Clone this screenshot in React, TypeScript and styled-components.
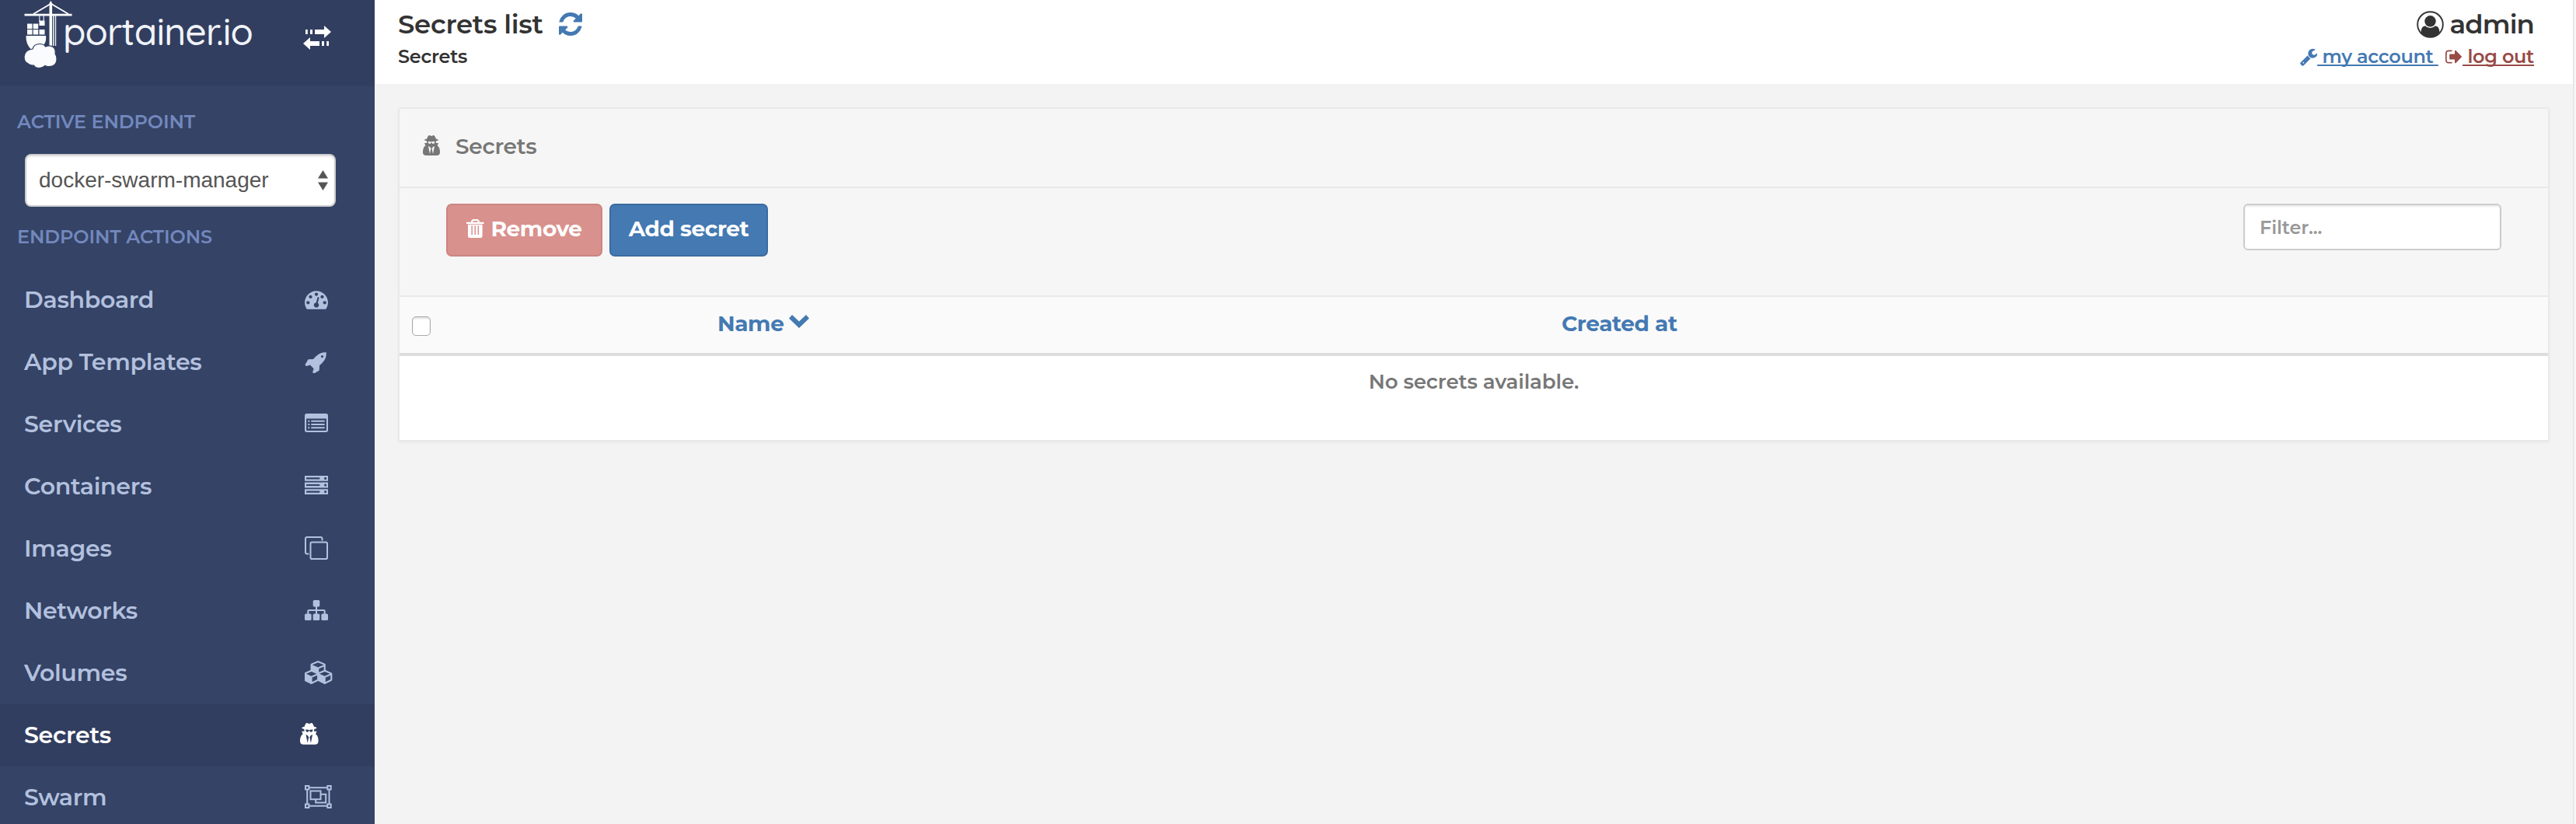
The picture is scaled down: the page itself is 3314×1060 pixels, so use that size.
import React from "react";
import styled, { createGlobalStyle, css } from "styled-components";

const sans = `Montserrat, Inter, "Liberation Sans", sans-serif`;

const color = {
  sidebar: "#344366",
  sidebarDark: "#313e5f",
  navText: "#b3c0de",
  section: "#7388bd",
  blue: "#4479b2",
  blueBorder: "#3b6ca0",
  red: "#984a46",
  dangerSoft: "#d9918d",
  dangerSoftBorder: "#cc8581",
  page: "#f3f3f3",
  line: "#e9e9e9",
  muted: "#777777",
  text: "#333333",
};

const Global = createGlobalStyle`
  * { box-sizing: border-box; }
  body { margin: 0; background: #f8f8f8; font-family: ${sans}; font-weight: 600; color: ${color.text}; overflow: hidden; }
`;

const Page = styled.div`
  display: flex;
  width: 3314px;
  height: 1060px;
  overflow: hidden;
  padding-right: 2px;
`;

/* Sidebar */
const Sidebar = styled.aside`
  display: flex;
  flex-direction: column;
  flex: none;
  width: 482px;
  background: ${color.sidebar};
`;
const Brand = styled.div`
  display: flex;
  align-items: flex-start;
  height: 110px;
  flex: none;
  padding-left: 30px;
  background: ${color.sidebarDark};
`;
const BrandName = styled.span`
  width: 309px;
  margin: 7px 0 0 1px;
  font-family: Quicksand, Lato, sans-serif;
  font-weight: 500;
  font-size: 48px;
  line-height: 66px;
  letter-spacing: -0.9px;
  color: #f1f3f9;
  white-space: nowrap;
`;
const ToggleIcon = styled.svg`
  margin-top: 32px;
  flex: none;
`;
const SectionLabel = styled.div<{ $top: number }>`
  margin-top: ${(p) => p.$top}px;
  padding-left: 22px;
  font-size: 24px;
  line-height: 40px;
  letter-spacing: -0.1px;
  color: ${color.section};
`;
const EndpointSelect = styled.div`
  display: flex;
  align-items: center;
  justify-content: space-between;
  flex: none;
  width: 400px;
  height: 68px;
  margin: 21px 0 0 32px;
  padding: 0 8px 0 16px;
  border: 2px solid #cccccc;
  border-radius: 8px;
  background: #ffffff;
  box-shadow: inset 0 2px 2px rgba(0, 0, 0, 0.075);
  font-family: "Liberation Sans", Arial, sans-serif;
  font-weight: 400;
  font-size: 28px;
  color: #555555;
`;
const Nav = styled.nav`
  display: flex;
  flex-direction: column;
  margin-top: 21px;
`;
const NavItem = styled.a<{ $active?: boolean }>`
  display: flex;
  align-items: center;
  flex: none;
  height: 80px;
  padding: 0 0 2px 31px;
  font-size: 30px;
  letter-spacing: -0.3px;
  color: ${color.navText};
  ${(p) => p.$active && css`
    background: ${color.sidebarDark};
    color: #ffffff;
  `}
`;
const NavText = styled.span`
  flex: 1;
`;
const NavIcon = styled.span<{ $w: number }>`
  display: flex;
  width: ${(p) => p.$w}px;
`;

/* Main column */
const Main = styled.main`
  display: flex;
  flex-direction: column;
  flex: 1;
  background: ${color.page};
  border-right: 2px solid #e7e7e7;
`;
const Header = styled.header`
  display: flex;
  justify-content: space-between;
  height: 108px;
  padding: 11px 50px 0 30px;
  background: #ffffff;
`;
const HeaderSide = styled.div<{ $end?: boolean }>`
  display: flex;
  flex-direction: column;
  gap: 7px;
  align-items: ${(p) => (p.$end ? "flex-end" : "flex-start")};
`;
const TitleRow = styled.div<{ $gap: number }>`
  display: flex;
  align-items: center;
  gap: ${(p) => p.$gap}px;
  font-size: 34px;
  line-height: 40px;
  letter-spacing: -0.3px;
`;
const UserName = styled.span`
  letter-spacing: -0.9px;
`;
const SubRow = styled.div`
  display: flex;
  align-items: center;
  font-size: 24px;
  line-height: 30px;
  letter-spacing: -0.3px;
`;
const HeaderLink = styled.a<{ $c: string; $gap?: number }>`
  display: flex;
  align-items: center;
  margin-left: ${(p) => p.$gap ?? 0}px;
  color: ${(p) => p.$c};
`;
const LinkText = styled.span`
  white-space: pre;
  text-decoration: underline;
  text-decoration-thickness: 2px;
  text-underline-offset: 2px;
  text-decoration-skip-ink: none;
`;

/* Panel */
const Panel = styled.section`
  display: flex;
  flex-direction: column;
  height: 430px;
  margin: 30px 30px 0;
  border: 2px solid ${color.line};
  border-radius: 3px;
  background: #ffffff;
  box-shadow: 0 2px 3px rgba(0, 0, 0, 0.04);
`;
const PanelHeader = styled.div`
  display: flex;
  align-items: center;
  gap: 20px;
  height: 102px;
  padding: 0 30px 4px;
  border-bottom: 2px solid ${color.line};
  background: #f6f6f6;
  font-size: 28px;
  letter-spacing: -0.3px;
  color: ${color.muted};
`;
const Toolbar = styled.div`
  display: flex;
  align-items: flex-start;
  justify-content: space-between;
  height: 140px;
  padding: 20px 60px 0;
  border-bottom: 2px solid ${color.line};
  background: #f6f6f6;
`;
const Buttons = styled.div`
  display: flex;
  gap: 9px;
`;
const Button = styled.button<{ $danger?: boolean; $w: number }>`
  display: flex;
  align-items: center;
  justify-content: center;
  gap: 8px;
  width: ${(p) => p.$w}px;
  height: 68px;
  padding: 0 0 5px;
  border: 2px solid ${(p) => (p.$danger ? color.dangerSoftBorder : color.blueBorder)};
  border-radius: 7px;
  background: ${(p) => (p.$danger ? color.dangerSoft : color.blue)};
  font-family: inherit;
  font-weight: 700;
  font-size: 28px;
  letter-spacing: -0.4px;
  color: #ffffff;
`;
const Filter = styled.input`
  width: 332px;
  height: 60px;
  padding: 0 19px;
  border: 2px solid #cccccc;
  border-radius: 6px;
  background: #ffffff;
  box-shadow: inset 0 2px 2px rgba(0, 0, 0, 0.075);
  font-family: inherit;
  font-weight: 600;
  font-size: 24px;
  letter-spacing: -0.1px;
  &::placeholder { color: #999999; opacity: 1; }
`;
const TableHead = styled.div`
  display: grid;
  grid-template-columns: 393px 1086px 1fr;
  align-items: center;
  height: 76px;
  padding: 0 16px 4px;
  border-bottom: 4px solid #dddddd;
  background: #fafafa;
  font-weight: 700;
  font-size: 28px;
  letter-spacing: -0.4px;
  color: ${color.blue};
`;
const HeadCell = styled.div`
  display: flex;
  align-items: center;
  gap: 7px;
`;
const Checkbox = styled.input`
  appearance: none;
  width: 24px;
  height: 25px;
  margin: 6px 0 0;
  border: 1px solid #a9a9a9;
  border-radius: 5px;
  background: #ffffff;
  box-shadow: inset 0 2px 2px rgba(0, 0, 0, 0.12);
`;
const SortIcon = styled.svg`
  margin-bottom: 5px;
`;
const Empty = styled.div`
  padding-top: 16px;
  text-align: center;
  font-size: 26px;
  line-height: 34px;
  letter-spacing: -0.1px;
  color: ${color.muted};
`;

/* Icons */
const Glyph = ({ d, box, w, h }: { d: string; box: string; w: number; h: number }) => (
  <svg width={w} height={h} viewBox={box} fill="currentColor"><path d={d} /></svg>
);

const paths = {
  dashboard: "M384 1152q0-53-37.5-90.5t-90.5-37.5-90.5 37.5-37.5 90.5 37.5 90.5 90.5 37.5 90.5-37.5 37.5-90.5zm192-448q0-53-37.5-90.5t-90.5-37.5-90.5 37.5-37.5 90.5 37.5 90.5 90.5 37.5 90.5-37.5 37.5-90.5zm428 481l101-382q6-26-7.5-48.5t-38.5-29.5-48 6.5-30 39.5l-101 382q-60 5-107 43.5t-63 98.5q-20 77 20 146t117 89 146-20 89-117q16-60-6-117t-72-91zm660-33q0-53-37.5-90.5t-90.5-37.5-90.5 37.5-37.5 90.5 37.5 90.5 90.5 37.5 90.5-37.5 37.5-90.5zm-640-640q0-53-37.5-90.5t-90.5-37.5-90.5 37.5-37.5 90.5 37.5 90.5 90.5 37.5 90.5-37.5 37.5-90.5zm448 192q0-53-37.5-90.5t-90.5-37.5-90.5 37.5-37.5 90.5 37.5 90.5 90.5 37.5 90.5-37.5 37.5-90.5zm320 448q0 261-141 483-19 29-54 29h-1402q-35 0-54-29-141-221-141-483 0-182 71-348t191-286 286-191 348-71 348 71 286 191 191 286 71 348z",
  rocket: "M1440 448q0-40-28-68t-68-28-68 28-28 68 28 68 68 28 68-28 28-68zm224-288q0 249-75.5 430.5t-253.5 360.5q-81 80-195 176l-20 379q-2 16-16 26l-384 224q-7 4-16 4-12 0-23-9l-64-64q-13-14-8-32l85-276-281-281-276 85q-3 1-9 1-14 0-23-9l-64-64q-17-19-5-39l224-384q10-14 26-16l379-20q96-114 176-195 188-187 358-258t431-71q14 0 24 9.5t10 22.5z",
  cubes: "M640 1632l384-192v-314l-384 164v342zm-64-454l404-173-404-173-404 173zm1088 454l384-192v-314l-384 164v342zm-64-454l404-173-404-173-404 173zm-448-293l384-165v-266l-384 164v267zm-64-379l441-189-441-189-441 189zm1088 518v416q0 36-19 67t-52 47l-448 224q-25 14-57 14t-57-14l-448-224q-4-2-7-4-2 2-7 4l-448 224q-25 14-57 14t-57-14l-448-224q-33-16-52-47t-19-67v-416q0-38 21.5-70t56.5-48l434-186v-400q0-38 21.5-70t56.5-48l448-192q23-10 50-10t50 10l448 192q35 16 56.5 48t21.5 70v400l434 186q36 16 57 48t21 70z",
  secret: "M704 1536l96-448-96-128-128-64zm256 0l128-640-128 64-96 128zm160-1010q-2-4-4-6-10-8-96-8-70 0-167 19-7 2-21 2t-21-2q-97-19-167-19-86 0-96 8-2 2-4 6 2 18 4 27 2 3 7.5 6.5t7.5 10.5q2 4 7.5 20.5t7 20.5 7.5 17 8.5 17 9 14 12 13.5 14 9.5 17.5 8 20.5 4 24.5 2q36 0 59-12.5t32.5-30 14.5-34.5 11.5-29.5 17.5-12.5h12q11 0 17.5 12.5t11.5 29.5 14.5 34.5 32.5 30 59 12.5q13 0 24.5-2t20.5-4 17.5-8 14-9.5 12-13.5 9-14 8.5-17 7.5-17 7-20.5 7.5-20.5q2-7 7.5-10.5t7.5-6.5q2-9 4-27zm416 879q0 121-73 190t-194 69h-874q-121 0-194-69t-73-190q0-61 4.5-118t19-125.5 37.5-123.5 63.5-103.5 93.5-74.5l-90-220h214q-22-64-22-128 0-12 2-32-194-40-194-96 0-57 210-99 17-62 51.5-134t70.5-114q32-37 76-37 30 0 84 31t84 31 84-31 84-31q44 0 76 37 36 42 70.5 114t51.5 134q210 42 210 99 0 56-194 96 7 81-20 160h214l-82 225q63 33 107.5 96.5t65.5 143.5 29 151.5 8 148.5z",
  refresh: "M1639 1056q0 5-1 7-64 268-268 434.5t-478 166.5q-146 0-282.5-55t-243.5-157l-129 129q-19 19-45 19t-45-19-19-45v-448q0-26 19-45t45-19h448q26 0 45 19t19 45-19 45l-137 137q71 66 161 102t187 36q134 0 250-65t186-179q11-17 53-117 8-23 30-23h192q13 0 22.5 9.5t9.5 22.5zm25-800v448q0 26-19 45t-45 19h-448q-26 0-45-19t-19-45 19-45l138-138q-148-137-349-137-134 0-250 65t-186 179q-11 17-53 117-8 23-30 23h-199q-13 0-22.5-9.5t-9.5-22.5v-7q65-268 270-434.5t480-166.5q146 0 284 55.5t245 156.5l130-129q19-19 45-19t45 19 19 45z",
  wrench: "M448 1472q0-26-19-45t-45-19-45 19-19 45 19 45 45 19 45-19 19-45zm644-420l-682 682q-37 37-90 37-52 0-91-37l-106-108q-38-36-38-90 0-53 38-91l681-681q39 98 114.5 173.5t173.5 114.5zm634-435q0 39-23 106-47 134-164.5 217.5t-258.5 83.5q-185 0-316.5-131.5t-131.5-316.5 131.5-316.5 316.5-131.5q58 0 121.5 16.5t107.5 46.5q16 11 16 28t-16 28l-293 169v224l193 107q5-3 79-48.5t135.5-81 70.5-35.5q15 0 23.5 10t8.5 25z",
  signOut: "M704 1440q0 4 1 20t.5 26.5-3 23.5-10 19.5-20.5 6.5h-320q-119 0-203.5-84.5t-84.5-203.5v-704q0-119 84.5-203.5t203.5-84.5h320q13 0 22.5 9.5t9.5 22.5q0 4 1 20t.5 26.5-3 23.5-10 19.5-20.5 6.5h-320q-66 0-113 47t-47 113v704q0 66 47 113t113 47h312l11.5 1 11.5 3 8 5.5 7 9 2 13.5zm928-544q0 26-19 45l-544 544q-19 19-45 19t-45-19-19-45v-288h-448q-26 0-45-19t-19-45v-384q0-26 19-45t45-19h448v-288q0-26 19-45t45-19 45 19l544 544q19 19 19 45z",
};

const ListIcon = () => (
  <svg width="30" height="30" viewBox="0 0 30 30" fill="currentColor">
    <path fillRule="evenodd" d="M2.7 2h24.6A2.7 2.7 0 0 1 30 4.7v18.6a2.7 2.7 0 0 1-2.7 2.7H2.7A2.7 2.7 0 0 1 0 23.3V4.7A2.7 2.7 0 0 1 2.7 2zM2.1 8.6v14.7q0 .6.6.6h24.6q.6 0 .6-.6V8.6z" />
    <path d="M4.3 10.7h2v2h-2zM8.3 10.7h17.4v2H8.3zM4.3 15h2v2h-2zM8.3 15h17.4v2H8.3zM4.3 19.300h2v2h-2zM8.3 19.300h17.4v2H8.3z" />
  </svg>
);
const ServerIcon = () => (
  <svg width="30" height="30" viewBox="0 0 30 30" fill="currentColor">
    {[2, 10.6, 19.2].map((y) => (
      <path key={y} fillRule="evenodd" d={`M0 ${y}h30v6.8H0zM2.1 ${y + 2.3}v2.2h17.2v-2.2zM25 ${y + 3.4}a1.6 1.6 0 1 0 3.2 0a1.6 1.6 0 1 0-3.2 0z`} />
    ))}
  </svg>
);
const CloneIcon = () => (
  <svg width="30" height="30" viewBox="0 0 30 30" fill="none" stroke="currentColor" strokeWidth="2">
    <rect x="7.5" y="7.5" width="21.5" height="21.5" rx="1.8" />
    <path d="M5.4 22.5H2.8A1.8 1.8 0 0 1 1 20.7V2.8A1.8 1.8 0 0 1 2.8 1h17.9a1.8 1.8 0 0 1 1.8 1.8v2.6" />
  </svg>
);
const SitemapIcon = () => (
  <svg width="30" height="30" viewBox="0 0 30 30" fill="currentColor">
    <rect x="10.7" y="2" width="8.6" height="8.6" rx="1.6" />
    <rect x="0" y="19.4" width="8.6" height="8.6" rx="1.6" />
    <rect x="10.7" y="19.4" width="8.6" height="8.6" rx="1.6" />
    <rect x="21.4" y="19.4" width="8.6" height="8.6" rx="1.6" />
    <path d="M4.3 20v-3.8q0-1.2 1.2-1.2h19q1.2 0 1.2 1.2V20M15 10v10" fill="none" stroke="currentColor" strokeWidth="2.1" />
  </svg>
);
const GroupIcon = () => (
  <svg width="35" height="30" viewBox="0 0 35 30" fill="none" stroke="currentColor" strokeWidth="2">
    <path d="M6 3.2h23M6 26.8h23M3.2 6v18M31.5 6v18" />
    <path d="M1 1h4.4v4.4H1zM29.300 1h4.4v4.4h-4.4zM1 24.600h4.4V29H1zM29.300 24.600h4.4V29h-4.4z" />
    <path d="M7.5 7.5h13v10.8h-13zM20.5 11.7h6.7v10.8H14.2v-4" />
  </svg>
);
const UserIcon = () => (
  <svg width="35" height="35" viewBox="0 0 35 35">
    <circle cx="17.5" cy="17.5" r="16.3" fill="none" stroke="currentColor" strokeWidth="1.9" />
    <circle cx="17.5" cy="13.3" r="7.2" fill="currentColor" />
    <path fill="currentColor" d="M5.5 27.5q.4-7.8 5.4-8.2 2.9 2.7 6.6 2.7t6.6-2.7q5 .4 5.4 8.2Q24.5 34 17.5 34T5.5 27.500z" />
  </svg>
);
const TrashIcon = () => (
  <svg width="23" height="24" viewBox="0 0 23 24" fill="currentColor">
    <path fillRule="evenodd" d="M6 3.7V2.2L8 0h6.8l2 2.2v1.5h5.7v2.4H0V3.7zM8 3.7h7L14 1.9H9z" />
    <path fillRule="evenodd" d="M2 6.8h18.6v14.7Q20.6 24 18.2 24H4.4Q2 24 2 21.5zM6.4 8.3v11.7h1.5V8.3zM10.5 8.3v11.7h1.5V8.3zM14.6 8.3v11.7h1.5V8.3z" />
  </svg>
);
const CraneLogo = styled.svg`
  flex: none;
  overflow: visible;
`;
const Crane = () => (
  <CraneLogo width="50" height="90" viewBox="30 0 50 90" fill="#fafbfd">
    <path d="M31.5 17.8h61v2.6h-61z" />
    <path d="M63.5 4l1.8-3 1.8 3v55h-3.6zM68.2 20h1.5v39h-1.5zM71 20h1.2v39H71z" />
    <path d="M65 5L43 18M66 5l22 13" stroke="#fafbfd" strokeWidth="2" fill="none" />
    <path d="M50.8 20v8M56.3 20v8" stroke="#c8cee0" strokeWidth="1.4" />
    <path d="M50.5 26.5h7v6.5h-7zM35 30.5h6.5v6.5H35zM42.7 30.5h6.5v6.5h-6.5zM35 38h6.5v6.5H35zM42.7 38h6.5v6.5h-6.5zM50.5 38h7v6.5h-7z" />
    <path d="M33.5 46h25.5q1 7-2.500 11.500L40 63.500q-7-7-6.500-17.500z" />
    <path
      d="M43.500 63q1.500-6.500 9-6.500 5.500 0 7.500 3.500 6-2.500 10 .5 3.500 3 2.500 8.500 2.500 3.500 2 8.500-1.500 8.500-10.500 8-2.500 0-4.500-1-3 3-7.500 3-5 0-7-3.500-5 .8-8-2.500-4.500-1.800-4.500-8.500 1-9 11-10z"
      transform="translate(-1.5 0)"
      stroke="#313e5f" strokeWidth="1.2"
    />
  </CraneLogo>
);

type Entry = { label: string; icon: React.ReactNode; active?: boolean; w?: number };
const entries: Entry[] = [
  { label: "Dashboard", icon: <Glyph d={paths.dashboard} box="0 0 1792 1792" w={30} h={30} /> },
  { label: "App Templates", icon: <Glyph d={paths.rocket} box="0 -64 1792 1792" w={30} h={30} /> },
  { label: "Services", icon: <ListIcon /> },
  { label: "Containers", icon: <ServerIcon /> },
  { label: "Images", icon: <CloneIcon /> },
  { label: "Networks", icon: <SitemapIcon /> },
  { label: "Volumes", icon: <Glyph d={paths.cubes} box="64 0 2304 1792" w={38.6} h={30} /> },
  { label: "Secrets", icon: <Glyph d={paths.secret} box="128 0 1408 1792" w={23.6} h={30} />, active: true, w: 96 },
  { label: "Swarm", icon: <GroupIcon /> },
];

export default function App() {
  return (
    <Page>
      <Global />
      <Sidebar>
        <Brand>
          <Crane />
          <BrandName>portainer.io</BrandName>
          <ToggleIcon width="36" height="32" viewBox="0 0 36 32" fill="#ffffff">
            <path d="M3 6h2.8v6H3zM9 6h3v6H9zM15 6h12V1l9 8-9 8v-5H15z" />
            <path d="M33 21h-2.8v6H33zM27 21h-3v6H27zM21 21H9v-5l-9 8 9 8v-5h12z" />
          </ToggleIcon>
        </Brand>
        <SectionLabel $top={27}>ACTIVE ENDPOINT</SectionLabel>
        <EndpointSelect>
          docker-swarm-manager
          <svg width="13" height="26" viewBox="0 0 13 26" fill="#555555"><path d="M6.5 0L13 10.5H0zM6.5 26L0 15.5h13z" /></svg>
        </EndpointSelect>
        <SectionLabel $top={19}>ENDPOINT ACTIONS</SectionLabel>
        <Nav>
          {entries.map((e) => (
            <NavItem key={e.label} $active={e.active}>
              <NavText>{e.label}</NavText>
              <NavIcon $w={e.w ?? 90}>{e.icon}</NavIcon>
            </NavItem>
          ))}
        </Nav>
      </Sidebar>
      <Main>
        <Header>
          <HeaderSide>
            <TitleRow $gap={20}>
              Secrets list
              <HeaderLink $c={color.blue}><Glyph d={paths.refresh} box="128 128 1536 1536" w={30} h={30} /></HeaderLink>
            </TitleRow>
            <SubRow>Secrets</SubRow>
          </HeaderSide>
          <HeaderSide $end>
            <TitleRow $gap={8}><UserIcon /><UserName>admin</UserName></TitleRow>
            <SubRow>
              <HeaderLink $c={color.blue}>
                <Glyph d={paths.wrench} box="64 0 1664 1792" w={22.3} h={24} />
                <LinkText>{"\u00a0my account\u00a0"}</LinkText>
              </HeaderLink>
              <HeaderLink $c={color.red} $gap={9}>
                <Glyph d={paths.signOut} box="64 0 1664 1792" w={22.3} h={24} />
                <LinkText>{"\u00a0log out"}</LinkText>
              </HeaderLink>
            </SubRow>
          </HeaderSide>
        </Header>
        <Panel>
          <PanelHeader>
            <Glyph d={paths.secret} box="128 0 1408 1792" w={22} h={28} />
            Secrets
          </PanelHeader>
          <Toolbar>
            <Buttons>
              <Button $danger $w={201}><TrashIcon />Remove</Button>
              <Button $w={204}>Add secret</Button>
            </Buttons>
            <Filter placeholder="Filter..." />
          </Toolbar>
          <TableHead>
            <HeadCell><Checkbox type="checkbox" /></HeadCell>
            <HeadCell>
              Name
              <SortIcon width="26" height="17" viewBox="0 0 26 17" fill="currentColor"><path d="M4 0l9 8.5L22 0l4 4.5L13 17 0 4.5z" /></SortIcon>
            </HeadCell>
            <HeadCell>Created at</HeadCell>
          </TableHead>
          <Empty>No secrets available.</Empty>
        </Panel>
      </Main>
    </Page>
  );
}
